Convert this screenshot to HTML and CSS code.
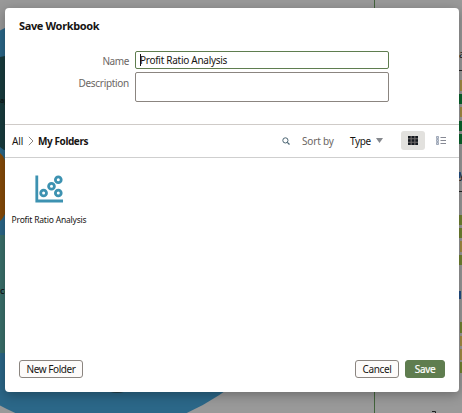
FILE: index.html
```html
<!DOCTYPE html>
<html lang="en">
<head>
<meta charset="utf-8">
<title>Save Workbook</title>
<link rel="stylesheet" href="styles.css">
</head>
<body>
<svg class="canvas" width="462" height="413" viewBox="0 0 462 413" aria-hidden="true">
  <rect width="462" height="413" fill="#999"/>
  <circle cx="101" cy="218" r="213" fill="#2b6788"/>
  <rect width="462" height="9" fill="#999"/>
  <path d="M0 57 10 55V150H4L0 147z" fill="#183c3e"/>
  <path d="M0 153Q5 157 8 170V205Q5 217 0 221z" fill="#864b08"/>
  <path d="M0 235H8V353H0z" fill="#3a706b"/>
  <path d="M374.500 0V413" stroke="#42633b"/>
  <path d="M110 392h14q-7 2-14 0" fill="#243f48"/>
  <text class="chart-label" x="0" y="103">ap</text>
  <text class="chart-label" x="0" y="294">Co</text>
  <text class="chart-title" x="459" y="58">a</text>
  <text class="chart-title" x="459" y="178">y</text>
  <path d="M432 411.500h3.500v1.500" fill="none" stroke="#222"/>
  <path d="M458 70.500h4M458 191.500h4" stroke="#222"/>
  <path d="M460 80h2v11h-2zM460 107h2v10h-2zM460 241h2v11h-2zM460 336h2v10h-2zM460 349h2v11h-2z" fill="#a58c43"/>
  <path d="M459 94h3v10h-3zM459 121h3v10h-3zM459 134h3v10h-3z" fill="#08642c"/>
  <path d="M459 215h3v10h-3zM459 228h3v10h-3zM459 255h3v10h-3zM460 322h2v11h-2zM460 362h2v11h-2z" fill="#728331"/>
  <path d="M460 291v8M459.500 172v6" stroke="#244f86" stroke-width="2"/>
</svg>

<main class="dialog" role="dialog" aria-labelledby="title">
  <h1 class="title" id="title">Save Workbook</h1>
  <form class="form">
    <label class="label">Name</label>
    <div class="field field-name"><span class="caret"></span><span>Profit Ratio Analysis</span></div>
    <label class="label label-desc">Description</label>
    <div class="field field-desc"></div>
  </form>
  <nav class="toolbar">
    <span class="all">All</span>
    <svg class="chevron" width="6" height="10" viewBox="0 0 6 10"><path d="M.8.8 5 5 .8 9.200" fill="none" stroke="#8b8580"/></svg>
    <strong class="current">My Folders</strong>
    <svg class="search" width="8" height="8" viewBox="0 0 8 8"><circle cx="3.400" cy="3.400" r="2.600" fill="none" stroke="#4a6472"/><path d="m5.300 5.300 2.200 2.200" stroke="#4a6472" stroke-width="1.200"/></svg>
    <span class="sort">Sort by</span>
    <span class="type">Type</span>
    <svg class="arrow" width="7" height="5" viewBox="0 0 7 5"><path d="M0 0h7L3.500 5z" fill="#85888d"/></svg>
    <span class="grid-button">
      <svg width="10" height="9" viewBox="0 0 10 9"><path d="M0 0h10v9H0z" fill="#706c6b"/><path d="M0 0h2.600v2.300H0zM3.700 0h2.600v2.300H3.700zM7.400 0H10v2.300H7.400zM0 3.350h2.600v2.300H0zM3.700 3.350h2.600v2.300H3.700zM7.400 3.350H10v2.300H7.400zM0 6.700h2.600V9H0zM3.700 6.700h2.600V9H3.700zM7.400 6.700H10V9H7.400z" fill="#161a20"/></svg>
    </span>
    <svg class="list-icon" width="10" height="9" viewBox="0 0 10 9"><path d="M.5.500h2v2h-2zM.5 3.500h2v2h-2zM.5 6.500h2v2h-2z" fill="#cbd2df" stroke="#8e98aa" stroke-width=".8"/><path d="M4.500 1.500H10M4.500 4.500H10M4.500 7.500H10" stroke="#868994"/></svg>
  </nav>
  <section class="content">
    <figure class="item">
      <svg width="28" height="28" viewBox="0 0 28 28" fill="none" stroke="#3d92b1"><path d="M1.800.5V26H28" stroke-width="2.800"/><g stroke-width="2.800"><circle cx="8.600" cy="18" r="2.900"/><circle cx="16.500" cy="11.300" r="2.900"/><circle cx="23.300" cy="4.800" r="2.900"/><circle cx="23.300" cy="18" r="2.900"/></g></svg>
      <figcaption>Profit Ratio Analysis</figcaption>
    </figure>
  </section>
  <footer class="footer">
    <button class="button new-folder">New Folder</button>
    <button class="button cancel">Cancel</button>
    <button class="button save">Save</button>
  </footer>
</main>
</body>
</html>
```

FILE: styles.css
```css
* { box-sizing: border-box; }
body {
  margin: 0;
  width: 462px;
  height: 413px;
  overflow: hidden;
  background: #999;
  color: #171513;
  font: 10px/14px "Noto Sans", "Open Sans", sans-serif;
  white-space: nowrap;
}
.canvas { position: absolute; inset: 0; }
.chart-label { font-size: 7px; font-weight: 700; fill: #10191b; }
.chart-title { font-size: 11px; fill: #202020; }
.dialog {
  position: relative;
  display: flex;
  flex-direction: column;
  width: 454px;
  height: 384px;
  margin: 8px 0 0 5px;
  background: #fff;
  border-radius: 4px;
  box-shadow: 0 3px 12px rgba(0, 0, 0, .3);
}
.title {
  height: 43px;
  margin: 0;
  padding: 11px 14px 0;
  font-size: 11px;
  line-height: 14px;
  letter-spacing: -.36px;
}
.form {
  display: grid;
  grid-template-columns: 124px 254px;
  grid-template-rows: 18px 30px;
  column-gap: 6px;
  row-gap: 3px;
  height: 73px;
}
.label { padding-top: 3px; text-align: right; color: #6b6663; letter-spacing: -.4px; }
.label-desc { padding-top: 4px; letter-spacing: -.3px; }
.field { border: 1px solid #8b8580; border-radius: 2px; background: #fff; }
.field-name { display: flex; align-items: center; padding-left: 4px; border-color: #5f7d4f; letter-spacing: -.28px; }
.caret { width: 1px; height: 12px; margin-right: -1px; background: #111; }
.toolbar {
  display: flex;
  align-items: center;
  height: 34px;
  padding: 0 13px 0 7px;
  border-top: 1px solid #cfcbc8;
  border-bottom: 1px solid #cfcfcf;
}
.all { width: 16px; letter-spacing: -.1px; }
.chevron { margin-right: 4px; }
.current { width: 244px; letter-spacing: -.42px; }
.search { margin-right: 12px; }
.sort { width: 48px; color: #6b6663; letter-spacing: -.18px; }
.type { width: 26px; letter-spacing: -.4px; }
.arrow { margin-bottom: 2px; }
.grid-button {
  display: grid;
  place-items: center;
  width: 24px;
  height: 19px;
  margin: 0 11px 2px 18px;
  border-radius: 3px;
  background: #e2e1de;
}
.list-icon { margin-bottom: 2px; }
.content { flex: 1; padding: 17px 7px; }
.item { display: flex; flex-direction: column; align-items: center; width: 74px; margin: 0; }
.item svg { margin-right: 1px; }
.item figcaption { margin-top: 10px; font-size: 8.500px; line-height: 14px; letter-spacing: -.2px; }
.footer { display: flex; height: 32px; padding: 0 14px; }
.button {
  height: 18px;
  padding: 0;
  border: 1px solid #8b8580;
  border-radius: 3px;
  background: #fdfbfa;
  color: #171513;
  font: 10px/14px "Noto Sans", sans-serif;
}
.new-folder { width: 64px; letter-spacing: -.42px; }
.cancel { width: 44px; margin-left: auto; letter-spacing: -.35px; }
.save { width: 40px; margin-left: 6px; border-color: #5f7d4f; background: #5f7d4f; color: #fff; -webkit-text-stroke: .2px #fff; letter-spacing: -.3px; }
```
